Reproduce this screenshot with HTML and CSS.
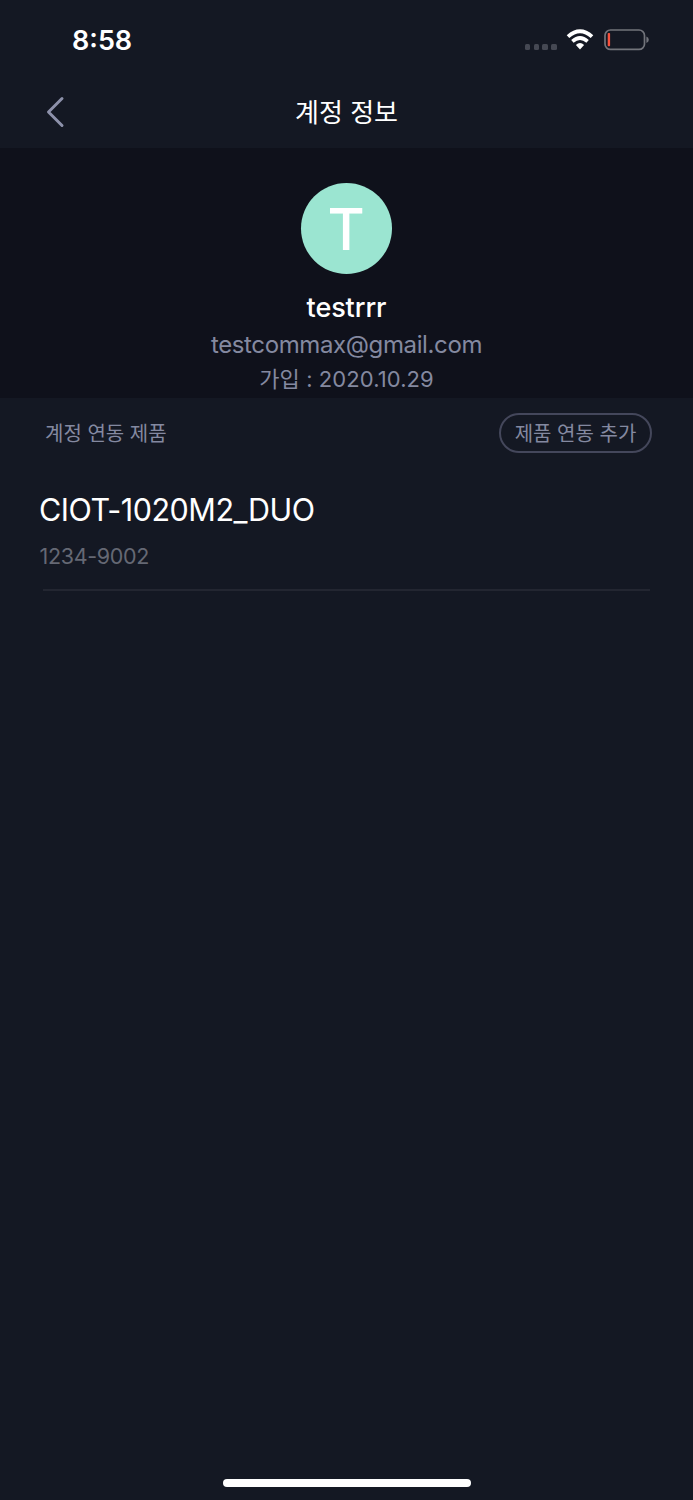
FILE: index.html
```html
<!DOCTYPE html>
<html lang="ko">
<head>
  <meta charset="UTF-8" />
  <meta name="viewport" content="width=device-width, initial-scale=1.0"/>
  <title>계정 정보</title>
  <link rel="stylesheet" href="styles.css">
</head>
<body>

  <div class="status-bar">
    <span class="time">8:58</span>
    <div class="status-icons">
      <div class="signal"><i></i><i></i><i></i><i></i></div>
      <svg class="wifi" width="28" height="21" viewBox="0 0 28 21">
        <path d="M2 7.6 Q14 -3.2 26 7.6" fill="none" stroke="#fff" stroke-width="3.8"/>
        <path d="M6.4 12.4 Q14 5.6 21.6 12.4" fill="none" stroke="#fff" stroke-width="3.6"/>
        <path d="M9.9 16 Q14 12.2 18.1 16 L14 20.4 Z" fill="#fff"/>
      </svg>
      <svg class="battery" width="46" height="22" viewBox="0 0 46 22">
        <rect x="1" y="1" width="39.5" height="19.4" rx="5.5" fill="none" stroke="#72747b" stroke-width="1.7"/>
        <rect x="3.7" y="4" width="2.4" height="13.2" rx="0.8" fill="#f9513d"/>
        <path d="M42.4 7.6 Q44.8 8.6 44.8 10.8 Q44.8 13 42.4 14 Z" fill="#72747b"/>
      </svg>
    </div>
  </div>

  <header>
    <a class="back" href="#" aria-label="뒤로">
      <svg width="20" height="32" viewBox="0 0 20 32">
        <path d="M17 2.5 L3.5 16 L17 29.5" fill="none" stroke="#8d91aa" stroke-width="3" stroke-linecap="round" stroke-linejoin="round"/>
      </svg>
    </a>
    <h1>계정 정보</h1>
  </header>

  <section class="profile">
    <div class="avatar">T</div>
    <h2>testrrr</h2>
    <p class="email">testcommax@gmail.com</p>
    <p class="joined">가입 : 2020.10.29</p>
  </section>

  <section class="products">
    <div class="products-head">
      <h3>계정 연동 제품</h3>
      <button>제품 연동 추가</button>
    </div>
    <ul>
      <li>
        <span class="model">CIOT-1020M2_DUO</span>
        <span class="serial">1234-9002</span>
      </li>
    </ul>
  </section>

  <div class="home-indicator"></div>

</body>
</html>
```
FILE: styles.css
```css
* {
  box-sizing: border-box;
}
body {
  font-family: Inter, 'Noto Sans CJK KR', sans-serif;
  background: #141823;
  color: white;
  margin: 0;
  height: 1500px;
  display: flex;
  flex-direction: column;
}
h1, h2, h3, p, ul {
  margin: 0;
  padding: 0;
  font-weight: normal;
}
.status-bar {
  height: 76px;
  padding: 25px 43px 0 72px;
  display: flex;
  justify-content: space-between;
}
.time {
  font-size: 27px;
  line-height: 32px;
  font-weight: 600;
}
.status-icons {
  display: flex;
  align-items: flex-start;
  padding-top: 4px;
}
.signal {
  display: flex;
  gap: 3.2px;
  margin: 15px 9.5px 0 0;
}
.signal i {
  width: 5.5px;
  height: 5.5px;
  border-radius: 1.5px;
  background: #454853;
}
.battery {
  margin: 0 0 0 10px;
}
header {
  height: 72px;
  display: grid;
  grid-template-columns: 100px 1fr 100px;
  align-items: center;
}
.back {
  padding-left: 45px;
}
.back svg {
  display: block;
}
h1 {
  padding-top: 2px;
  font-size: 26px;
  line-height: 36px;
  text-align: center;
}
.profile {
  height: 250px;
  padding-top: 35px;
  background: #0f111b;
  display: flex;
  flex-direction: column;
  align-items: center;
}
.avatar {
  width: 91px;
  height: 91px;
  border-radius: 50%;
  background: #9be5d1;
  font-size: 57px;
  line-height: 93px;
  font-weight: 500;
  text-align: center;
  text-indent: -1px;
}
h2 {
  margin-top: 16px;
  font-size: 27px;
  line-height: 36px;
  font-weight: 500;
  letter-spacing: -0.1px;
}
.email {
  margin-top: 3px;
  font-size: 24px;
  line-height: 32px;
  letter-spacing: -0.38px;
  color: #8489a0;
}
.joined {
  margin-top: 2px;
  font-size: 22px;
  line-height: 32px;
  letter-spacing: 0.08px;
  color: #8489a0;
}
.products {
  flex: 1;
}
.products-head {
  height: 70px;
  padding: 0 41px 0 45px;
  display: flex;
  justify-content: space-between;
  align-items: center;
}
h3 {
  padding-top: 1px;
  font-size: 20px;
  line-height: 30px;
  color: #8489a0;
}
button {
  width: 153px;
  height: 40px;
  padding: 1px 0 0;
  background: none;
  border: 2px solid #44475b;
  border-radius: 20px;
  color: #8489a0;
  font-family: inherit;
  font-size: 20px;
  line-height: 30px;
}
ul {
  list-style: none;
  padding: 0 43px;
}
li {
  height: 123px;
  padding-top: 22px;
  border-bottom: 2px solid #232631;
  display: flex;
  flex-direction: column;
}
.model {
  margin-left: -4px;
  font-size: 30.5px;
  line-height: 40px;
  letter-spacing: -0.5px;
}
.serial {
  margin: 11px 0 0 -3.5px;
  font-size: 21.5px;
  line-height: 30px;
  letter-spacing: -0.32px;
  color: #656874;
}
.home-indicator {
  width: 248px;
  height: 8px;
  margin: 0 auto 13px;
  border-radius: 4px;
  background: white;
}
```
